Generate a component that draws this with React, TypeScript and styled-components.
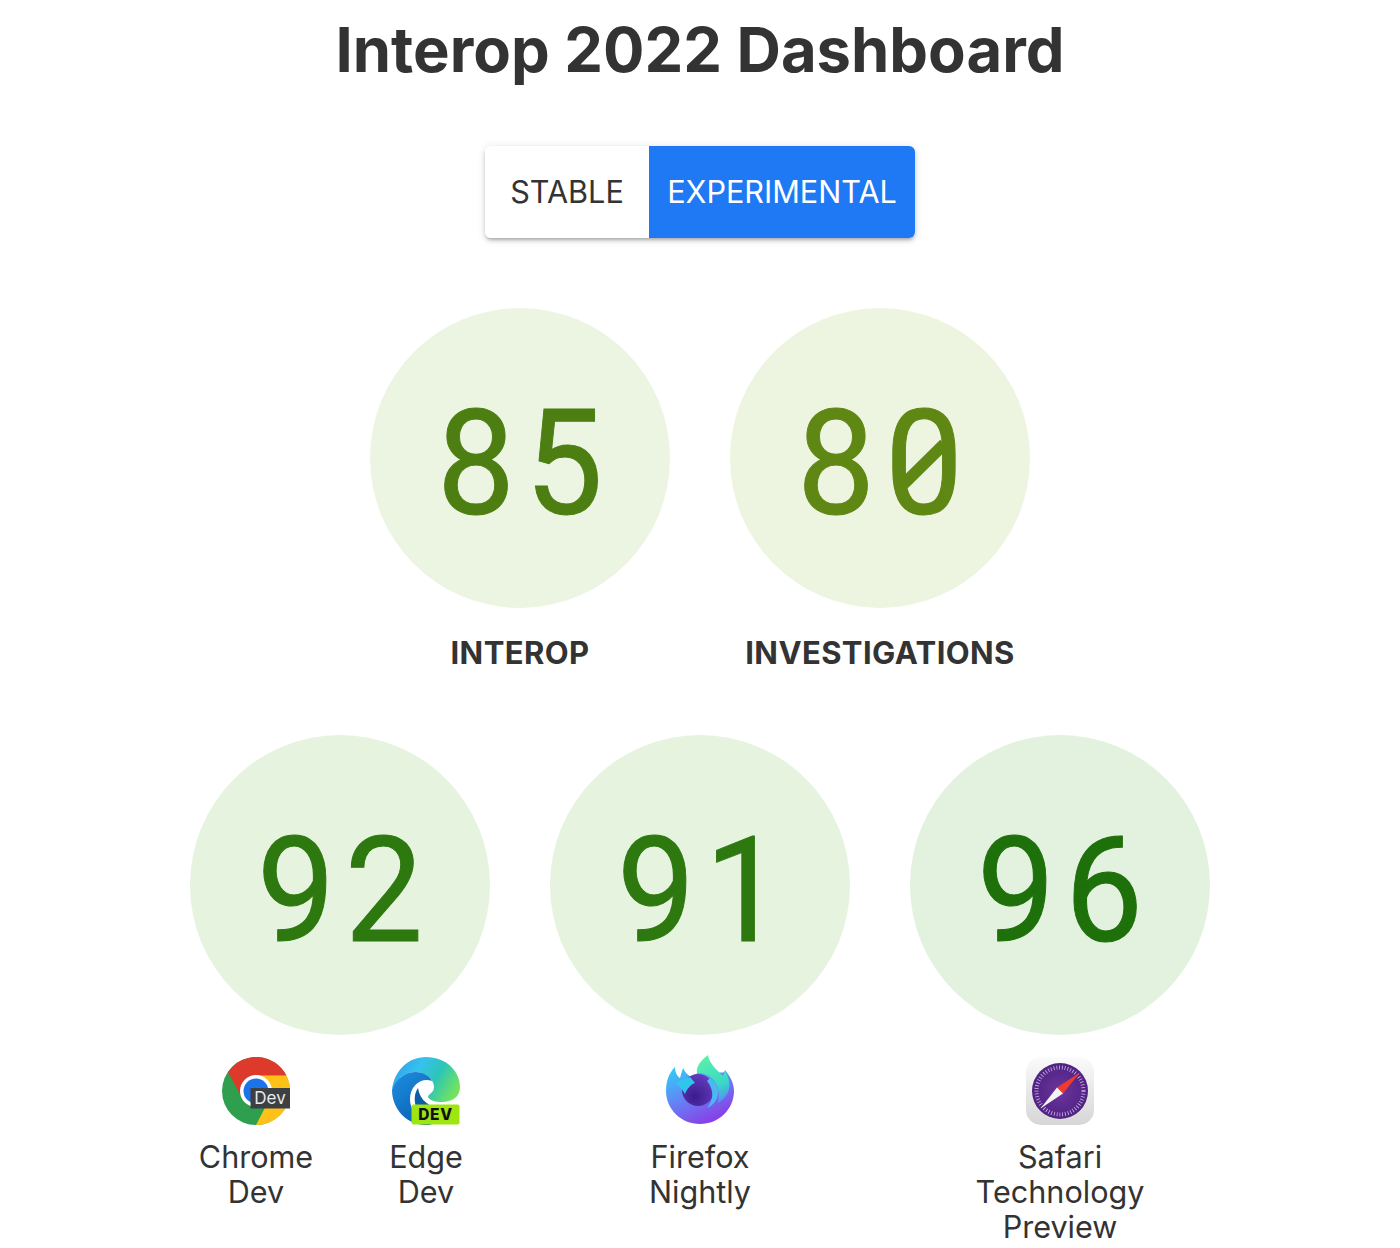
import styled, { createGlobalStyle } from "styled-components";

const GlobalStyle = createGlobalStyle`
  html, body {
    margin: 0;
    padding: 0;
    background: #fff;
    color: #333;
    font-family: Inter, "Liberation Sans", sans-serif;
  }
`;

const Page = styled.main`
  width: 1400px;
  height: 1248px;
  overflow: hidden;
  display: flex;
  flex-direction: column;
  align-items: center;
`;

const Title = styled.h1`
  margin: 11px 0 0;
  font-size: 61.5px;
  line-height: 77px;
  font-weight: 700;
  color: #333;
`;

const Toggle = styled.div`
  margin-top: 58px;
  display: flex;
  height: 92px;
  border-radius: 6px;
  overflow: hidden;
  box-shadow: 0 3px 3px -2px rgba(0, 0, 0, 0.2), 0 3px 4px rgba(0, 0, 0, 0.14),
    0 1px 8px rgba(0, 0, 0, 0.12);
`;

const ToggleButton = styled.button<{ $active?: boolean; $width: number }>`
  width: ${({ $width }) => $width}px;
  border: 0;
  padding: 0 0 2px;
  font-family: inherit;
  font-size: 30.6px;
  font-weight: 400;
  background: ${({ $active }) => ($active ? "#1f78f4" : "#fff")};
  color: ${({ $active }) => ($active ? "#fff" : "#333")};
`;

const ScoreRow = styled.section<{ $top: number }>`
  margin-top: ${({ $top }) => $top}px;
  display: flex;
  gap: 60px;
`;

const Column = styled.div`
  width: 300px;
  display: flex;
  flex-direction: column;
  align-items: center;
`;

const Circle = styled.div<{ $bg: string; $fg: string }>`
  width: 300px;
  height: 300px;
  padding-top: 14px;
  box-sizing: border-box;
  border-radius: 50%;
  display: flex;
  align-items: center;
  justify-content: center;
  background: ${({ $bg }) => $bg};
  color: ${({ $fg }) => $fg};
  font-family: Roboto, "DejaVu Sans Mono", monospace;
  font-size: 146px;
  font-weight: 400;
  -webkit-text-stroke: 1px currentColor;
  line-height: 1;
`;

const Digit = styled.span<{ $slashed?: boolean }>`
  position: relative;
  width: 88px;
  text-align: center;
  transform: scaleX(0.95);

  ${({ $slashed }) =>
    $slashed &&
    `&::after {
      content: "";
      position: absolute;
      left: 15px;
      top: 66px;
      width: 58px;
      height: 12px;
      background: currentColor;
      transform: rotate(-43deg);
    }`}
`;

const ScoreLabel = styled.div`
  margin-top: 27px;
  font-size: 31px;
  line-height: 36px;
  letter-spacing: 0.4px;
  font-weight: 700;
  color: #333;
`;

const BrowserRow = styled.div<{ $pair?: boolean }>`
  margin-top: 22px;
  width: 300px;
  box-sizing: border-box;
  padding-left: ${({ $pair }) => ($pair ? "2px" : "0")};
  display: flex;
  justify-content: center;
  gap: 40px;
`;

const Browser = styled.div`
  width: 130px;
  flex: none;
  display: flex;
  flex-direction: column;
  align-items: center;
  text-align: center;
  font-size: 30.6px;
  line-height: 35px;
  color: #333;
`;

const LogoFrame = styled.div`
  width: 68px;
  height: 68px;
  margin-bottom: 14px;
  display: flex;
  align-items: flex-end;

  svg {
    display: block;
    flex: none;
  }
`;

const ChromeDevLogo = () => (
  <svg width="68" height="68" viewBox="0 0 68 68">
    <circle cx="34" cy="34" r="34" fill="#2f9e4f" />
    <path d="M6 15A34 34 0 0 1 64.500 18.500L34 18.500 20.500 42Z" fill="#dd3a2c" />
    <path d="M64.500 18.500A34 34 0 0 1 34 68L47.500 42 34 18.500Z" fill="#fdc117" />
    <circle cx="34" cy="34" r="16" fill="#fff" />
    <circle cx="34" cy="34" r="12.500" fill="#1a73e8" />
    <rect x="28.500" y="31" width="39.500" height="20.500" fill="#3c4043" />
    <text x="48" y="47" textAnchor="middle" fontFamily="Inter, sans-serif" fontSize="17" fill="#e8eaed">
      Dev
    </text>
  </svg>
);

const EdgeDevLogo = () => (
  <svg width="68" height="68" viewBox="0 0 68 68">
    <defs>
      <linearGradient id="edgeTop" x1="0" y1="0.2" x2="1" y2="0.6">
        <stop offset="0" stopColor="#2f9fe8" />
        <stop offset="0.35" stopColor="#38c1ee" />
        <stop offset="0.65" stopColor="#2cc5b8" />
        <stop offset="1" stopColor="#72e35f" />
      </linearGradient>
      <linearGradient id="edgeLow" x1="0" y1="0" x2="0.6" y2="1">
        <stop offset="0" stopColor="#1d8fe0" />
        <stop offset="1" stopColor="#0b62b5" />
      </linearGradient>
    </defs>
    <path
      d="M0 33C2 14 16 0 34 0C54 0 68 14 68 30C68 40 60 45 50 45C44 45 38 44 36 40C36 37 42 36 42 30C42 22 33 15 24 15C12 15 3 23 0 33Z"
      fill="url(#edgeTop)"
    />
    <path
      d="M0 33C3 22 13 15 24 15C31 15 38 19 40 24C30 20 18 28 18 42C18 54 28 64 40 67.500C37 68 36 68 34 68C15 68 0 52 0 33Z"
      fill="url(#edgeLow)"
    />
    <path d="M26 31C21 38 21 52 32 60C38 64 44 65 50 63L50 50C42 52 28 46 26 31Z" fill="#0d5ea8" />
    <rect x="19.500" y="47.500" width="48" height="20" rx="2" fill="#9fe50f" />
    <text x="43.500" y="63" textAnchor="middle" fontFamily="Inter, sans-serif" fontWeight="800" fontSize="15.500" letterSpacing="0.6" fill="#111">
      DEV
    </text>
  </svg>
);

const FirefoxNightlyLogo = () => (
  <svg width="68" height="70" viewBox="0 0 68 70">
    <defs>
      <linearGradient id="ffBody" x1="0.1" y1="0.1" x2="0.6" y2="1">
        <stop offset="0" stopColor="#35c4f5" />
        <stop offset="0.4" stopColor="#5f8cf7" />
        <stop offset="1" stopColor="#8a3de6" />
      </linearGradient>
      <linearGradient id="ffFlame" x1="0.4" y1="0" x2="0.7" y2="1">
        <stop offset="0" stopColor="#5cf0a8" />
        <stop offset="0.65" stopColor="#38d8c8" />
        <stop offset="1" stopColor="#5a8cf5" />
      </linearGradient>
      <radialGradient id="ffGlobe" cx="0.4" cy="0.7" r="0.8">
        <stop offset="0" stopColor="#3a1c8c" />
        <stop offset="1" stopColor="#6a3fc4" />
      </radialGradient>
    </defs>
    <path
      d="M34 16C48 16 60 20 59 15C64 21 68 28 68 36C68 54 53 69 34 69C15 69 0 54 0 36C0 26 3 18 9 12C9 17 11 21 14 23C15 19 16 16 17 13C19 17 21 20 26 22Z"
      fill="url(#ffBody)"
    />
    <path d="M42 0C34 6 30 12 31 18C46 18 56 30 52 48C62 42 68 32 59 15L57 21C50 14 43 8 42 0Z" fill="url(#ffFlame)" />
    <circle cx="32" cy="35" r="16" fill="url(#ffGlobe)" />
    <path d="M9 28C14 25 20 24 24 22L29 28C24 30 21 34 19 39C16 34 13 31 9 28Z" fill="#2fc6ee" />
    <path d="M44 23C52 28 55 38 49 47C46 50 44 52 41 53C47 46 49 36 41 26Z" fill="#4bb8f2" />
  </svg>
);

const SafariTpLogo = () => (
  <svg width="68" height="68" viewBox="0 0 68 68">
    <defs>
      <linearGradient id="safariTile" x1="0" y1="0" x2="0" y2="1">
        <stop offset="0" stopColor="#fbfbfb" />
        <stop offset="1" stopColor="#d6d6d6" />
      </linearGradient>
      <radialGradient id="safariDial">
        <stop offset="0" stopColor="#6c359e" />
        <stop offset="1" stopColor="#4f2283" />
      </radialGradient>
    </defs>
    <rect width="68" height="68" rx="15" fill="url(#safariTile)" />
    <circle cx="34" cy="34" r="28" fill="url(#safariDial)" />
    <circle cx="34" cy="34" r="23.500" fill="none" stroke="#cdb6e2" strokeWidth="4" strokeDasharray="0.8 2" />
    <path d="M54 15.500L37 36.500 31 30.500Z" fill="#f03a2e" />
    <path d="M14.500 51.500L31 30.500 37 36.500Z" fill="#f4f4f4" />
  </svg>
);

const Score = ({ value }: { value: string }) => (
  <>
    {value.split("").map((digit, i) => (
      <Digit key={i} $slashed={digit === "0"}>
        {digit}
      </Digit>
    ))}
  </>
);

export default function App() {
  return (
    <>
      <GlobalStyle />
      <Page>
        <Title>Interop 2022 Dashboard</Title>
        <Toggle>
          <ToggleButton $width={164}>STABLE</ToggleButton>
          <ToggleButton $width={266} $active>
            EXPERIMENTAL
          </ToggleButton>
        </Toggle>

        <ScoreRow $top={70}>
          <Column>
            <Circle $bg="#ecf5e1" $fg="#4d7e12"><Score value="85" /></Circle>
            <ScoreLabel>INTEROP</ScoreLabel>
          </Column>
          <Column>
            <Circle $bg="#edf5e1" $fg="#5f8714"><Score value="80" /></Circle>
            <ScoreLabel>INVESTIGATIONS</ScoreLabel>
          </Column>
        </ScoreRow>

        <ScoreRow $top={64}>
          <Column>
            <Circle $bg="#e6f3df" $fg="#2d780f"><Score value="92" /></Circle>
            <BrowserRow $pair>
              <Browser>
                <LogoFrame><ChromeDevLogo /></LogoFrame>
                <div>Chrome</div>
                <div>Dev</div>
              </Browser>
              <Browser>
                <LogoFrame><EdgeDevLogo /></LogoFrame>
                <div>Edge</div>
                <div>Dev</div>
              </Browser>
            </BrowserRow>
          </Column>
          <Column>
            <Circle $bg="#e6f3df" $fg="#2d780f"><Score value="91" /></Circle>
            <BrowserRow>
              <Browser>
                <LogoFrame><FirefoxNightlyLogo /></LogoFrame>
                <div>Firefox</div>
                <div>Nightly</div>
              </Browser>
            </BrowserRow>
          </Column>
          <Column>
            <Circle $bg="#e3f1df" $fg="#1e700a"><Score value="96" /></Circle>
            <BrowserRow>
              <Browser>
                <LogoFrame><SafariTpLogo /></LogoFrame>
                <div>Safari</div>
                <div>Technology</div>
                <div>Preview</div>
              </Browser>
            </BrowserRow>
          </Column>
        </ScoreRow>
      </Page>
    </>
  );
}
